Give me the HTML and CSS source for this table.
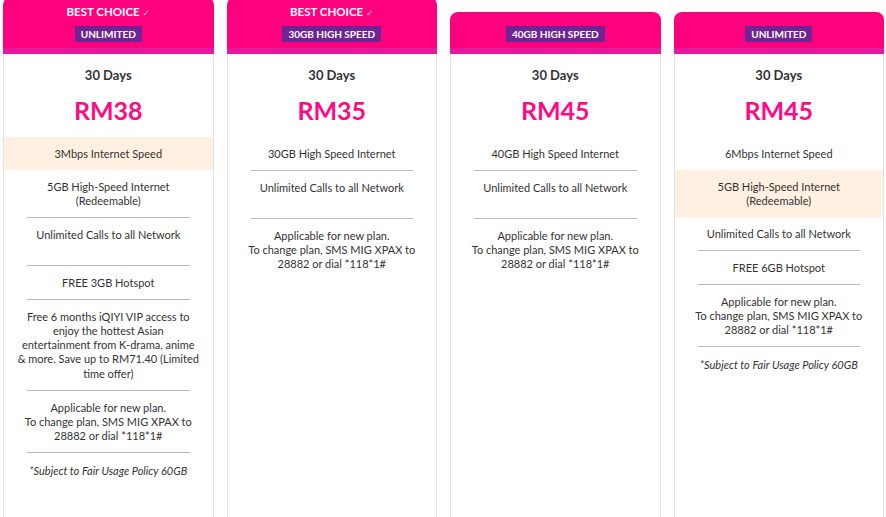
FILE: index.html
```html
<!DOCTYPE html>
<html>
<head>
<meta charset="utf-8">
<link rel="stylesheet" href="styles.css">
</head>
<body>
<div class="plans">
  <div class="card best">
    <div class="head">
      <div class="label">BEST CHOICE <span class="tick">✓</span></div>
      <span class="badge">UNLIMITED</span>
    </div>
    <div class="stripe"></div>
    <div class="body">
      <div class="days">30 Days</div>
      <div class="price">RM38</div>
      <div class="row hl">3Mbps Internet Speed</div>
      <div class="row">5GB High-Speed Internet<br>(Redeemable)</div>
      <div class="row tall">Unlimited Calls to all Network</div>
      <div class="row">FREE 3GB Hotspot</div>
      <div class="row long">Free 6 months iQIYI VIP access to<br>enjoy the hottest Asian<br>entertainment from K-drama, anime<br>&amp; more. Save up to RM71.40 (Limited<br>time offer)</div>
      <div class="row">Applicable for new plan.<br>To change plan, SMS MIG XPAX to 28882 or dial *118*1#</div>
      <div class="row last note">*Subject to Fair Usage Policy 60GB</div>
    </div>
  </div>

  <div class="card best">
    <div class="head">
      <div class="label">BEST CHOICE <span class="tick">✓</span></div>
      <span class="badge">30GB HIGH SPEED</span>
    </div>
    <div class="stripe"></div>
    <div class="body">
      <div class="days">30 Days</div>
      <div class="price">RM35</div>
      <div class="row">30GB High Speed Internet</div>
      <div class="row tall">Unlimited Calls to all Network</div>
      <div class="row last">Applicable for new plan.<br>To change plan, SMS MIG XPAX to 28882 or dial *118*1#</div>
    </div>
  </div>

  <div class="card">
    <div class="head">
      <span class="badge">40GB HIGH SPEED</span>
    </div>
    <div class="stripe"></div>
    <div class="body">
      <div class="days">30 Days</div>
      <div class="price">RM45</div>
      <div class="row">40GB High Speed Internet</div>
      <div class="row tall">Unlimited Calls to all Network</div>
      <div class="row last">Applicable for new plan.<br>To change plan, SMS MIG XPAX to 28882 or dial *118*1#</div>
    </div>
  </div>

  <div class="card">
    <div class="head">
      <span class="badge">UNLIMITED</span>
    </div>
    <div class="stripe"></div>
    <div class="body">
      <div class="days">30 Days</div>
      <div class="price">RM45</div>
      <div class="row last">6Mbps Internet Speed</div>
      <div class="row hl">5GB High-Speed Internet<br>(Redeemable)</div>
      <div class="row">Unlimited Calls to all Network</div>
      <div class="row">FREE 6GB Hotspot</div>
      <div class="row">Applicable for new plan.<br>To change plan, SMS MIG XPAX to 28882 or dial *118*1#</div>
      <div class="row last note">*Subject to Fair Usage Policy 60GB</div>
    </div>
  </div>
</div>
</body>
</html>
```

FILE: styles.css
```css
html, body {
  margin: 0;
  padding: 0;
  background: #fff;
  overflow: hidden;
}
body {
  font-family: Lato, "Open Sans", sans-serif;
  color: #333;
}
.plans {
  display: grid;
  grid-template-columns: repeat(4, 210.5px);
  column-gap: 13px;
  padding: 12px 0 0 3px;
  align-items: start;
}
.card {
  display: flex;
  flex-direction: column;
}
.head {
  background: #ff007f;
  border-radius: 8px 8px 0 0;
  padding: 14px 0 6px;
  display: flex;
  flex-direction: column;
  align-items: center;
}
.best .head {
  margin-top: -15px;
  padding-top: 8px;
}
.label {
  color: #fff;
  font-weight: 700;
  font-size: 11.5px;
  line-height: 14px;
  height: 14px;
  margin-bottom: 7px;
}
.tick {
  font-family: "DejaVu Sans", sans-serif;
  font-weight: 400;
  font-size: 9px;
  line-height: 0;
  opacity: 0.75;
}
.badge {
  display: block;
  background: #6e2494;
  color: #fff;
  font-weight: 700;
  font-size: 10px;
  line-height: 16px;
  height: 16px;
  padding: 0 6px;
  border-radius: 1px;
}
.stripe {
  height: 6px;
  background: #e519a0;
}
.body {
  border: 1px solid #e2e2e2;
  border-top: 0;
  min-height: 520px;
  text-align: center;
}
.days {
  font-weight: 700;
  font-size: 13px;
  line-height: 16px;
  padding-top: 13px;
  color: #333;
}
.price {
  font-weight: 700;
  font-size: 25px;
  line-height: 34px;
  color: #ff0a82;
  margin: 10px 0 10px;
}
.row {
  padding: 9.5px 11px 10.5px;
  font-size: 11px;
  line-height: 14px;
  color: #333;
  background: linear-gradient(#bcbcbc, #bcbcbc) no-repeat center bottom / calc(100% - 46px) 1px;
}
.row.tall {
  min-height: 28px;
}
.row.long {
  line-height: 14.3px;
}
.row.hl {
  padding-bottom: 9.5px;
  background: #fff0e1;
}
.row.last {
  padding-bottom: 9.5px;
  background: none;
}
.row.note {
  font-style: italic;
  padding-top: 11px;
}
```
